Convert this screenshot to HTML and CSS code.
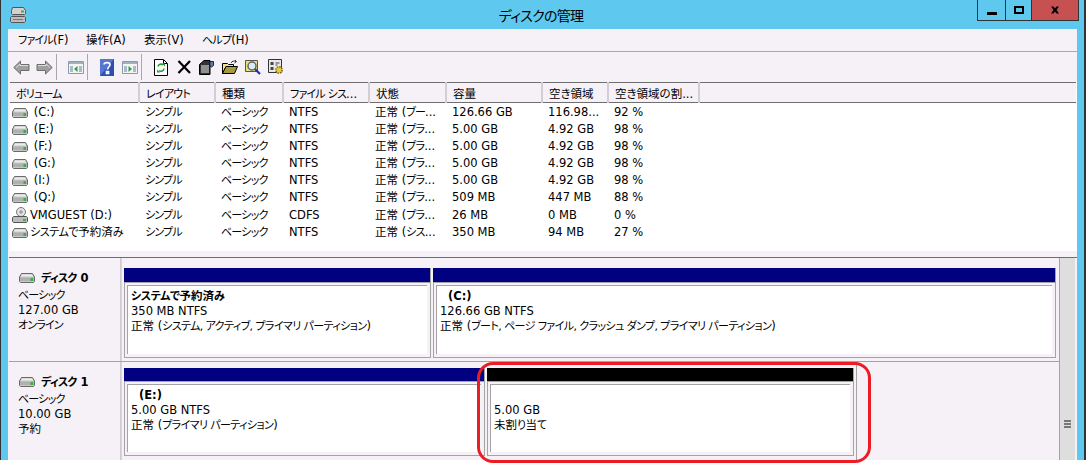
FILE: index.html
```html
<!DOCTYPE html>
<html lang="ja">
<head>
<meta charset="utf-8">
<title>ディスクの管理</title>
<link rel="stylesheet" href="styles.css">
</head>
<body>
<svg class="defs" width="0" height="0" aria-hidden="true">
  <symbol id="drive" viewBox="0 0 16 10">
    <path d="M2.500 .5h11l2 3.500v4.500l-1 1h-13l-1-1V4z" fill="#c8c8c8" stroke="#6a6a6a"/>
    <path d="M1 4.500h14v3.500H1z" fill="#b0b0b0"/>
    <path d="M3 1.500h10l1 2H2z" fill="#ececec"/>
    <path d="M11.500 5h2.500v3h-2.500z" fill="#35b53f"/>
  </symbol>
</svg>
<div class="app">
  <header class="titlebar">
    <svg class="appicon" viewBox="0 0 16 16" width="16" height="16">
      <path d="M2.500 .5h11l2 3v3l-1 1h-12l-1-1v-3z" fill="#d2d2d2" stroke="#555"/>
      <path d="M11 3.500h3v2h-3z" fill="#35b53f"/>
      <path d="M1.500 9.500h13l1 1v4l-1 1h-13l-1-1v-4z" fill="#bdbdbd" stroke="#555"/>
      <path d="M3 12h10v1H3z" fill="#777"/>
    </svg>
    <h1 class="title">ディスクの管理</h1>
    <div class="controls">
      <div class="ctl ctl-min"><span class="min-bar"></span></div>
      <div class="ctl ctl-max"><span class="max-box"></span></div>
      <div class="ctl ctl-close">
        <svg viewBox="0 0 10 8" width="10" height="8"><path d="M1 .5h2.500l1.500 2 1.500-2H9L6.500 4 9 7.500H6.500L5 5.500l-1.500 2H1L3.500 4z" fill="#000"/></svg>
      </div>
    </div>
  </header>
  <div class="client">
    <nav class="menubar">
      <span class="menu"><span class="k">ファイル</span>(F)</span>
      <span class="menu">操作(A)</span>
      <span class="menu">表示(V)</span>
      <span class="menu"><span class="k">ヘルプ</span>(H)</span>
    </nav>
    <div class="toolbar">
      <span class="tool"><svg viewBox="0 0 17 15" width="17" height="15"><path d="M.8 7.500 7.500 1v3.500h8.500v6H7.500V14z" fill="#a0a0a0" stroke="#6e6e6e"/><path d="M3 7.500 7 4v1.500h8" fill="none" stroke="#ddd"/></svg></span>
      <span class="tool"><svg viewBox="0 0 17 15" width="17" height="15"><path d="M16.200 7.500 9.500 1v3.500H1v6h8.500V14z" fill="#a0a0a0" stroke="#6e6e6e"/><path d="M2 5.500h8V4l4 3.500" fill="none" stroke="#ddd"/></svg></span>
      <span class="sep"></span>
      <span class="tool"><svg viewBox="0 0 16 13" width="16" height="13"><path d="M.5.500h15v12H.5z" fill="#f4f4f4" stroke="#8b9aa8"/><path d="M1 1h14v2H1z" fill="#9fb0bf"/><path d="M2 5h3v6H2zM11 5h3v6h-3z" fill="#a9bccb"/><path d="M9.500 5v6L6 8z" fill="#2f9e44"/></svg></span>
      <span class="sep"></span>
      <span class="tool"><svg viewBox="0 0 14 17" width="14" height="17"><path d="M0 0h14v17H0z" fill="#2d4fb0"/><path d="M0 0h14L0 17z" fill="#5477d2"/><path d="M4 5.500C4 3 10 3 10 5.500 10 8 7.500 8 7.500 10.500M6.500 12.500h2v2h-2z" fill="none" stroke="#fff" stroke-width="1.700"/></svg></span>
      <span class="tool"><svg viewBox="0 0 16 13" width="16" height="13"><path d="M.5.500h15v12H.5z" fill="#f4f4f4" stroke="#8b9aa8"/><path d="M1 1h14v2H1z" fill="#9fb0bf"/><path d="M2 5h3v6H2zM11 5h3v6h-3z" fill="#a9bccb"/><path d="M6.500 5v6L10 8z" fill="#2f9e44"/></svg></span>
      <span class="sep"></span>
      <span class="tool"><svg viewBox="0 0 14 17" width="14" height="17"><path d="M.5.500h9l4 4v12H.5z" fill="#fff" stroke="#000"/><path d="M9.500 1v3.500H13" fill="none" stroke="#000"/><path d="M4 7.500a3 3 0 0 1 5-1.500M10 9.500a3 3 0 0 1-5 2" fill="none" stroke="#1f9d2f" stroke-width="1.600"/><path d="M8 4.500h3v3zM6 13.500H3v-3z" fill="#1f9d2f"/></svg></span>
      <span class="tool"><svg viewBox="0 0 14 14" width="14" height="14"><path d="M1.500 1 13 13M13 1 1.500 13" stroke="#000" stroke-width="2.200" fill="none"/></svg></span>
      <span class="tool"><svg viewBox="0 0 15 15" width="15" height="15"><path d="M.5 4.500 5 .5h6v14H.5z" fill="#333" stroke="#000"/><path d="M2 6h8M2 8h8M2 10h8M2 12h8" stroke="#eee"/><path d="M11 1.500h3.500v4l-2 1.500-1.500-1z" fill="#5a7fb5" stroke="#223"/></svg></span>
      <span class="tool"><svg viewBox="0 0 16 14" width="16" height="14"><path d="M.5 3.500h5l1 1h5v2H4l-3.500 7z" fill="#f4e08a" stroke="#000"/><path d="M4 6.500h11.500l-3 7H.5z" fill="#a69b3a" stroke="#000"/><path d="M9 3c1-2 3-2.500 5-1.500M13 0l1.500 1.500L12.500 3" fill="none" stroke="#333"/></svg></span>
      <span class="tool"><svg viewBox="0 0 16 16" width="16" height="16"><path d="M.5 1.500h12v11H.5z" fill="#f0e07a" stroke="#555"/><circle cx="7" cy="7" r="4" fill="#d5f0f5" stroke="#666" stroke-width="1.500"/><path d="M10 10l5 5" stroke="#2030c0" stroke-width="2.200"/></svg></span>
      <span class="tool"><svg viewBox="0 0 16 16" width="16" height="16"><path d="M.5.500h13v13H.5z" fill="#e8e8e8" stroke="#333"/><path d="M2.500 3h3v3h-3zM2.500 8h3v3h-3z" fill="#444"/><path d="M7.500 4h4M7.500 6h2" stroke="#444"/><circle cx="11" cy="11" r="3.200" fill="#e8c93a" stroke="#7a6a10" stroke-width="1.400" stroke-dasharray="1.500 1"/></svg></span>
    </div>
    <section class="list">
      <table class="vol">
        <colgroup>
          <col class="c1"><col class="c2"><col class="c3"><col class="c4"><col class="c5"><col class="c6"><col class="c7"><col class="c8"><col class="c9">
        </colgroup>
        <thead>
          <tr><th><span class="k">ボリューム</span></th><th><span class="k">レイアウト</span></th><th>種類</th><th><span class="k">ファイル シス</span>...</th><th>状態</th><th>容量</th><th>空き領域</th><th>空き領域の割...</th><th></th></tr>
        </thead>
        <tbody>
          <tr><td><span class="vn"><svg class="ic"><use href="#drive"/></svg><span class="pre"> (C:)</span></span></td><td><span class="k">シンプル</span></td><td><span class="k">ベーシック</span></td><td>NTFS</td><td>正常 (<span class="k">ブー</span>...</td><td>126.66 GB</td><td>116.98...</td><td>92 %</td><td></td></tr>
          <tr><td><span class="vn"><svg class="ic"><use href="#drive"/></svg><span class="pre"> (E:)</span></span></td><td><span class="k">シンプル</span></td><td><span class="k">ベーシック</span></td><td>NTFS</td><td>正常 (<span class="k">プラ</span>...</td><td>5.00 GB</td><td>4.92 GB</td><td>98 %</td><td></td></tr>
          <tr><td><span class="vn"><svg class="ic"><use href="#drive"/></svg><span class="pre"> (F:)</span></span></td><td><span class="k">シンプル</span></td><td><span class="k">ベーシック</span></td><td>NTFS</td><td>正常 (<span class="k">プラ</span>...</td><td>5.00 GB</td><td>4.92 GB</td><td>98 %</td><td></td></tr>
          <tr><td><span class="vn"><svg class="ic"><use href="#drive"/></svg><span class="pre"> (G:)</span></span></td><td><span class="k">シンプル</span></td><td><span class="k">ベーシック</span></td><td>NTFS</td><td>正常 (<span class="k">プラ</span>...</td><td>5.00 GB</td><td>4.92 GB</td><td>98 %</td><td></td></tr>
          <tr><td><span class="vn"><svg class="ic"><use href="#drive"/></svg><span class="pre"> (I:)</span></span></td><td><span class="k">シンプル</span></td><td><span class="k">ベーシック</span></td><td>NTFS</td><td>正常 (<span class="k">プラ</span>...</td><td>5.00 GB</td><td>4.92 GB</td><td>98 %</td><td></td></tr>
          <tr><td><span class="vn"><svg class="ic"><use href="#drive"/></svg><span class="pre"> (Q:)</span></span></td><td><span class="k">シンプル</span></td><td><span class="k">ベーシック</span></td><td>NTFS</td><td>正常 (<span class="k">プラ</span>...</td><td>509 MB</td><td>447 MB</td><td>88 %</td><td></td></tr>
          <tr><td><span class="vn"><svg class="ic ic-cd" viewBox="0 0 16 16"><circle cx="9" cy="5" r="4.500" fill="#e4e4e4" stroke="#777"/><circle cx="9" cy="5" r="1.200" fill="#fff" stroke="#777"/><path d="M1.500 9.500h13l1 1v4l-1 1h-13l-1-1v-4z" fill="#bdbdbd" stroke="#555"/><path d="M11 12h3v2h-3z" fill="#35b53f"/></svg><span>VMGUEST (D:)</span></span></td><td><span class="k">シンプル</span></td><td><span class="k">ベーシック</span></td><td>CDFS</td><td>正常 (<span class="k">プラ</span>...</td><td>26 MB</td><td>0 MB</td><td>0 %</td><td></td></tr>
          <tr><td><span class="vn"><svg class="ic"><use href="#drive"/></svg><span><span class="k">システムで</span>予約済<span class="k">み</span></span></span></td><td><span class="k">シンプル</span></td><td><span class="k">ベーシック</span></td><td>NTFS</td><td>正常 (<span class="k">シス</span>...</td><td>350 MB</td><td>94 MB</td><td>27 %</td><td></td></tr>
        </tbody>
      </table>
    </section>
    <section class="graph">
      <div class="disks">
        <div class="disk disk-0">
          <div class="label">
            <div class="label-head"><svg class="ic"><use href="#drive"/></svg><b><span class="k">ディスク</span> 0</b></div>
            <div class="k">ベーシック</div><div>127.00 GB</div><div class="k">オンライン</div>
          </div>
          <div class="parts parts-0">
            <div class="part w-sys">
              <div class="bar"></div>
              <div class="box"><b><span class="k">システムで</span>予約済<span class="k">み</span></b><span>350 MB NTFS</span><span>正常 (<i class="k">システム, アクティブ, プライマリ パーティション</i>)</span></div>
            </div>
            <div class="part grow">
              <div class="bar"></div>
              <div class="box"><b class="pre">  (C:)</b><span>126.66 GB NTFS</span><span>正常 (<i class="k">ブート, ページ ファイル, クラッシュ ダンプ, プライマリ パーティション</i>)</span></div>
            </div>
          </div>
        </div>
        <div class="disk disk-1">
          <div class="label">
            <div class="label-head"><svg class="ic"><use href="#drive"/></svg><b><span class="k">ディスク</span> 1</b></div>
            <div class="k">ベーシック</div><div>10.00 GB</div><div>予約</div>
          </div>
          <div class="parts parts-1">
            <div class="part w-e">
              <div class="bar"></div>
              <div class="box"><b class="pre">  (E:)</b><span>5.00 GB NTFS</span><span>正常 (<i class="k">プライマリ パーティション</i>)</span></div>
            </div>
            <div class="part grow">
              <div class="bar bar-free"></div>
              <div class="box"><span class="blank"> </span><span>5.00 GB</span><span>未割<i class="k">り</i>当<i class="k">て</i></span></div>
            </div>
          </div>
        </div>
      </div>
      <div class="scroll"><span class="grip"></span></div>
    </section>
  </div>
  <div class="callout"></div>
</div>
</body>
</html>
```
FILE: styles.css
```css
* { box-sizing: border-box; }
html, body { margin: 0; padding: 0; background: #fff; }
body {
  width: 1086px;
  height: 469px;
  overflow: hidden;
  font: 11.5px/15px "DejaVu Sans", "Noto Sans CJK JP", sans-serif;
  font-feature-settings: "palt";
  color: #000;
}
.k { font-size: 11px; letter-spacing: -.8px; font-style: normal; }
.vn .k, .box b .k { letter-spacing: -.4px; }
.box i.k { letter-spacing: -.6px; }
.defs { position: absolute; }
.app {
  position: relative;
  width: 1086px;
  height: 460px;
  background: #5ec8ef;
  border-left: 1px solid #333;
  border-right: 2px solid #333;
  display: flex;
  flex-direction: column;
}
.titlebar {
  height: 29px;
  flex: none;
  display: flex;
  align-items: flex-start;
  position: relative;
}
.appicon { margin: 7px 0 0 9px; }
.title {
  position: absolute;
  left: 0;
  right: 3px;
  top: 6px;
  margin: 0;
  text-align: center;
  font-size: 14px;
  line-height: 20px;
  font-weight: 400;
  letter-spacing: -.7px;
}
.controls {
  margin-left: auto;
  margin-right: 5px;
  display: flex;
  height: 21px;
  border: solid #333;
  border-width: 0 1px 1px;
  position: relative;
}
.ctl { display: flex; align-items: center; justify-content: center; }
.ctl-min { width: 28px; border-right: 1px solid #333; }
.ctl-max { width: 26px; border-right: 1px solid #333; }
.ctl-close { width: 46px; background: #c75050; }
.min-bar { width: 10px; height: 3px; background: #000; margin-top: 6px; }
.max-box { width: 10px; height: 8px; border: 2px solid #000; }
.client {
  margin: 0 7px;
  flex: 1;
  min-height: 0;
  background: #f5f1f6;
  display: flex;
  flex-direction: column;
}
.menubar {
  height: 23px;
  flex: none;
  display: grid;
  grid-template-columns: 68px 58px 58px auto;
  align-items: center;
  padding: 1px 0 0 10px;
  border-bottom: 1px solid #a8a8a8;
}
.toolbar {
  height: 30px;
  flex: none;
  display: flex;
  align-items: center;
  padding-left: 2px;
}
.tool { width: 23px; height: 22px; display: flex; align-items: center; justify-content: center; }
.sep { width: 1px; height: 26px; background: #a8a8a8; margin-right: 7px; }
.list {
  flex: none;
  height: 175px;
  margin-left: 1px;
  background: #fff;
  border-bottom: 6px solid #f5f1f6;
  border-left: 1px solid #f5f1f6;
  overflow: hidden;
}
.vol { border-collapse: collapse; table-layout: fixed; width: 1066px; }
.c1 { width: 129px; } .c2 { width: 76px; } .c3 { width: 68px; } .c4 { width: 86px; }
.c5 { width: 77px; } .c6 { width: 96px; } .c7 { width: 66px; } .c8 { width: 91px; } .c9 { width: auto; }
.vol th {
  height: 20px;
  padding: 3px 0 0 6px;
  background: #f5f1f6;
  border-top: 1px solid #6f6f6f;
  border-bottom: 1px solid #6f6f6f;
  border-right: 2px solid #d2ced4;
  font-weight: 400;
  text-align: left;
  white-space: nowrap;
  overflow: hidden;
}
.vol th:last-child { border-right: 0; }
.vol td {
  height: 17px;
  padding: 2px 0 0 6px;
  white-space: nowrap;
  overflow: hidden;
}
.vol td:first-child { padding-left: 2px; }
.vn { display: flex; align-items: center; gap: 2px; }
.ic { width: 16px; height: 10px; flex: none; }
.ic-cd { height: 16px; }
.pre { white-space: pre; }
.graph {
  flex: 1;
  min-height: 0;
  display: flex;
  border-top: 1px solid #6f6f6f;
  margin-left: 1px;
}
.disks { flex: 1; min-width: 0; display: flex; flex-direction: column; }
.disk { display: flex; }
.disk-0 { height: 104px; border-bottom: 1px solid #a5a2a5; }
.disk-1 { flex: 1; min-height: 0; }
.label {
  width: 112px;
  flex: none;
  padding: 10px 0 0 9px;
  border-right: 1px solid #cfcbd1;
}
.label-head { display: flex; align-items: center; gap: 6px; padding-left: 1px; height: 20px; }
.label-head b { font-weight: 700; }
.parts { display: flex; gap: 2px; padding: 10px 3px 3px 2px; border-left: 1px solid #d8d4da; }
.parts-0 { flex: 1; }
.parts-1 { width: 736px; padding: 6px 2px 4px 2px; border-right: 1px solid #a5a2a5; }
.part { display: flex; flex-direction: column; }
.w-sys { width: 307px; }
.w-e { width: 361px; }
.grow { flex: 1; min-width: 0; }
.bar {
  height: 15px;
  flex: none;
  background: #000080;
  border: solid #a5a2a5;
  border-width: 0 1px 1px 0;
}
.parts-1 .bar { height: 14px; }
.bar-free { background: #000; }
.box {
  flex: 1;
  display: flex;
  flex-direction: column;
  min-height: 0;
  padding: 3px 3px 6px;
  border: 1px solid #a5a2a5;
  border-top: 0;
  position: relative;
}
.box b, .box span { display: block; white-space: pre; }
.box b span, .box span span { display: inline; }
.box b { font-weight: 700; }
.box::before {
  content: "";
  position: absolute;
  inset: 2px 3px 3px 2px;
  background: #fff;
  border: solid #a5a2a5;
  border-width: 1px 0 0 1px;
}
.box > * { position: relative; padding: 3px 0 0 3px; margin-bottom: -3px; }
.scroll {
  width: 16px;
  flex: none;
  margin-right: 2px;
  background: #dedede;
  border-left: 1px solid #a5a2a5;
  display: flex;
  align-items: flex-end;
  justify-content: center;
  padding-bottom: 32px;
}
.grip {
  width: 7px;
  height: 8px;
  background: repeating-linear-gradient(#777 0 2px, transparent 2px 3px);
}
.callout {
  position: absolute;
  left: 476px;
  top: 362px;
  width: 394px;
  height: 101px;
  border: 3px solid #ed1c24;
  border-radius: 16px;
}
```
